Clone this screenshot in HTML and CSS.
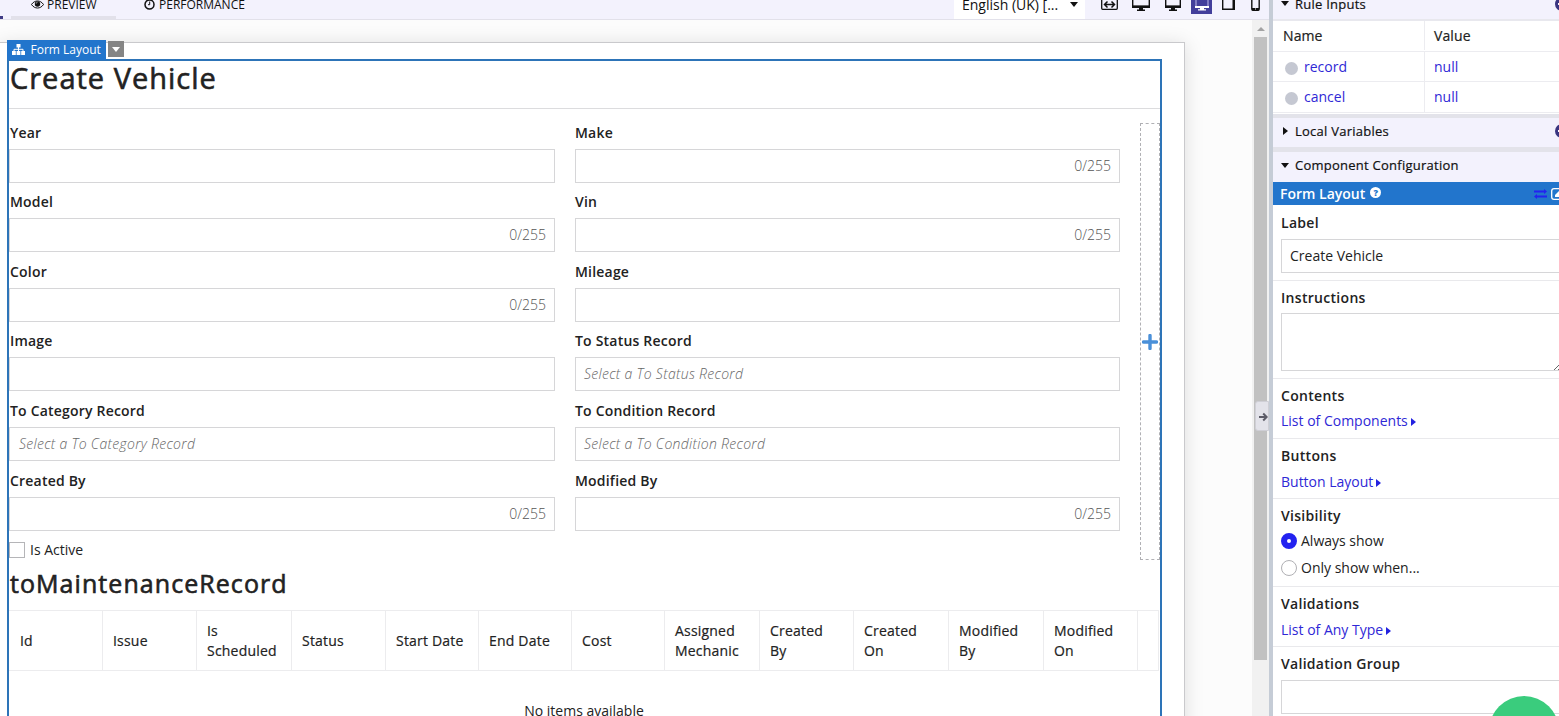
FILE: index.html
```
<!DOCTYPE html>
<html lang="en">
<head>
  <meta charset="UTF-8">
  <title>Create Vehicle - Interface Designer</title>
  <link rel="stylesheet" href="styles.css">
</head>
<body>
  <div class="designer">
    <main class="canvas">
      <header class="toolbar">
        <div class="tab tab-active"></div>
        <div class="tab tab-preview">
          <svg width="13" height="9" viewBox="0 0 13 9"><path d="M.5 4.5C3.5-.2 9.5-.2 12.500 4.500C9.500 9.200 3.500 9.200 .5 4.500Z" fill="none" stroke="#111"/><circle cx="6.500" cy="4" r="2.700" fill="#111"/><path d="M5.200 3.600a1.300 1.300 0 0 1 1.300-1.300" fill="none" stroke="#fff" stroke-width=".6"/></svg>
          <span>PREVIEW</span>
        </div>
        <div class="tab tab-performance">
          <svg width="11" height="11" viewBox="0 0 11 11"><circle cx="5.500" cy="5.500" r="4.500" fill="none" stroke="#111" stroke-width="1.500"/><path d="M5.700 2.500v3.200H4" fill="none" stroke="#111"/></svg>
          <span>PERFORMANCE</span>
        </div>
        <div class="locale"><span>English (UK) [...</span><i class="caret-down"></i></div>
        <div class="devices">
          <svg class="device-fit" width="17" height="11" viewBox="0 0 17 11"><path d="M.7 0v8.300q0 1 1 1h13.600q1 0 1-1V0" fill="none" stroke="#111" stroke-width="1.300"/><path d="M3.500 4.500h10M6.500 1.500l-3 3 3 3M10.500 1.500l3 3-3 3" fill="none" stroke="#111" stroke-width="1.500"/></svg>
          <svg class="device-wide" width="18" height="12" viewBox="0 0 18 12"><path d="M.7 0v6.500h16.600V0" fill="none" stroke="#111" stroke-width="1.400"/><path d="M0 5.500h18v2.500H0zM7 8h4v1.500h2V11H5V9.500h2z" fill="#111"/></svg>
          <svg class="device-desktop" width="16" height="12" viewBox="0 0 16 12"><path d="M.7 0v6.500h14.600V0" fill="none" stroke="#111" stroke-width="1.400"/><path d="M0 5.500h16v2.500H0zM6 8h4v1.500h2V11H4V9.500h2z" fill="#111"/></svg>
          <div class="device-current"><svg width="14" height="12" viewBox="0 0 14 12"><path d="M1 0v6.500h12V0" fill="none" stroke="#a9a6dc" stroke-width="1.200"/><path d="M0 6h14v2H0zM5 8h4v1.200h2v1.300H3V9.200h2z" fill="#fff"/></svg></div>
          <svg class="device-tablet" width="14" height="11" viewBox="0 0 14 11"><path d="M.7 0v9.300H12V0" fill="none" stroke="#111" stroke-width="1.400"/><path d="M10.500 0H13v10h-2.500z" fill="#111"/></svg>
          <svg class="device-phone" width="9" height="12" viewBox="0 0 9 12"><path d="M.8 0v9q0 1.200 1.200 1.200h5Q8.200 10.200 8.200 9V0" fill="none" stroke="#111" stroke-width="1.400"/><path d="M1 8h7v2.500H1z" fill="#111"/><path d="M4 8.500h1v1H4z" fill="#fff"/></svg>
        </div>
      </header>

      <div class="workspace">
        <div class="stage">
          <div class="paper">
            <section class="form-layout">
              <div class="selection-tag">
                <div class="selection-name">
                  <svg width="13" height="11" viewBox="0 0 13 11"><path d="M4.500 0h4v3.500h-4zM0 7h3.800v4H0zM4.600 7h3.800v4H4.600zM9.200 7H13v4H9.200z" fill="#fff"/><path d="M6.500 3v4M2 7.500V5.300h9v2.200" fill="none" stroke="#fff"/></svg>
                  <span>Form Layout</span>
                </div>
                <div class="selection-menu"><i class="caret-down"></i></div>
              </div>

              <h1>Create Vehicle</h1>

              <div class="columns">
                <div class="fields">
                  <div class="field"><label>Year</label><div class="input"></div></div>
                  <div class="field"><label>Make</label><div class="input"><span class="count">0/255</span></div></div>
                  <div class="field"><label>Model</label><div class="input"><span class="count">0/255</span></div></div>
                  <div class="field"><label>Vin</label><div class="input"><span class="count">0/255</span></div></div>
                  <div class="field"><label>Color</label><div class="input"><span class="count">0/255</span></div></div>
                  <div class="field"><label>Mileage</label><div class="input"></div></div>
                  <div class="field"><label>Image</label><div class="input"></div></div>
                  <div class="field"><label>To Status Record</label><div class="input"><span class="placeholder">Select a To Status Record</span></div></div>
                  <div class="field"><label>To Category Record</label><div class="input"><span class="placeholder">Select a To Category Record</span></div></div>
                  <div class="field"><label>To Condition Record</label><div class="input"><span class="placeholder">Select a To Condition Record</span></div></div>
                  <div class="field"><label>Created By</label><div class="input"><span class="count">0/255</span></div></div>
                  <div class="field"><label>Modified By</label><div class="input"><span class="count">0/255</span></div></div>
                  <div class="check"><i class="checkbox"></i><span>Is Active</span></div>
                </div>
                <div class="add-column">
                  <svg width="16" height="16" viewBox="0 0 16 16"><path d="M8 1.500v13M1.500 8h13" fill="none" stroke="#4a90d9" stroke-width="3.400" stroke-linecap="round"/></svg>
                </div>
              </div>

              <h2>toMaintenanceRecord</h2>
              <table class="grid">
                <colgroup>
                  <col class="w94"><col class="w94"><col class="w95"><col class="w94"><col class="w93"><col class="w93"><col class="w93"><col class="w95"><col class="w94"><col class="w95"><col class="w95"><col class="w94"><col class="w21">
                </colgroup>
                <thead>
                  <tr><th>Id</th><th>Issue</th><th>Is Scheduled</th><th>Status</th><th>Start Date</th><th>End Date</th><th>Cost</th><th>Assigned Mechanic</th><th>Created By</th><th>Created On</th><th>Modified By</th><th>Modified On</th><th></th></tr>
                </thead>
                <tbody>
                  <tr><td colspan="13">No items available</td></tr>
                </tbody>
              </table>
            </section>
          </div>
        </div>
        <div class="scrollbar">
          <i class="scroll-up"></i>
          <div class="scroll-thumb"></div>
          <div class="collapse">
            <svg width="9" height="10" viewBox="0 0 9 10"><path d="M0 5h7.500M4.200 1.500L7.700 5 4.200 8.500" fill="none" stroke="#5c5c68" stroke-width="2"/></svg>
          </div>
        </div>
      </div>
    </main>

    <div class="divider"></div>

    <aside class="panel">
      <div class="panel-head head-inputs"><i class="caret-down"></i><span>Rule Inputs</span><i class="add"></i></div>
      <div class="inputs">
        <div class="inputs-row inputs-title"><span>Name</span><span>Value</span></div>
        <div class="inputs-row"><span><i class="dot"></i>record</span><span>null</span></div>
        <div class="inputs-row"><span><i class="dot"></i>cancel</span><span>null</span></div>
      </div>
      <div class="panel-head head-variables"><i class="caret-right"></i><span>Local Variables</span><i class="add"></i></div>
      <div class="panel-head head-config"><i class="caret-down"></i><span>Component Configuration</span></div>
      <div class="component-bar">
        <span>Form Layout</span>
        <i class="help">?</i>
        <svg class="swap" width="13" height="10" viewBox="0 0 13 10"><path d="M0 2.500h11M13 7.500H2" stroke="#2322f0" stroke-width="1.800"/><path d="M10 0l3 2.500L10 5zM3 5L0 7.500 3 10z" fill="#2322f0"/></svg>
        <svg class="edit" width="8" height="12" viewBox="0 0 8 12"><path d="M8 .7H3Q.7.7.7 3v6Q.7 11.300 3 11.300h5" fill="none" stroke="#fff" stroke-width="1.300"/><path d="M4 9V7l4-4v6z" fill="#fff"/></svg>
      </div>

      <div class="prop prop-label"><h3>Label</h3><div class="prop-input">Create Vehicle</div></div>
      <div class="prop prop-instructions">
        <h3>Instructions</h3>
        <div class="prop-area"><svg width="8" height="8" viewBox="0 0 8 8"><path d="M0 8L8 0M4 8l4-4" stroke="#555" stroke-width=".9"/></svg></div>
      </div>
      <div class="prop prop-link prop-contents"><h3>Contents</h3><a>List of Components<i class="caret-right"></i></a></div>
      <div class="prop prop-link"><h3>Buttons</h3><a>Button Layout<i class="caret-right"></i></a></div>
      <div class="prop prop-visibility">
        <h3>Visibility</h3>
        <div class="radio"><i class="radio-on"></i>Always show</div>
        <div class="radio"><i class="radio-off"></i>Only show when...</div>
      </div>
      <div class="prop prop-link"><h3>Validations</h3><a>List of Any Type<i class="caret-right"></i></a></div>
      <div class="prop prop-group"><h3>Validation Group</h3><div class="prop-input"></div></div>
    </aside>
  </div>
  <div class="chat-bubble"></div>
</body>
</html>
```

FILE: styles.css
```
* {
  box-sizing: border-box;
}

body {
  margin: 0;
  height: 716px;
  overflow: hidden;
  position: relative;
  font-family: "Open Sans", sans-serif;
  font-size: 14px;
  color: #222;
  background: #fff;
}

h1, h2, h3 {
  margin: 0;
}

svg, i {
  display: block;
  flex: none;
}

i {
  font-style: normal;
}

.designer {
  display: flex;
  height: 716px;
}

.canvas {
  width: 1269px;
  flex: none;
  display: flex;
  flex-direction: column;
}

.caret-down {
  border: 4px solid transparent;
  border-top: 5px solid #111;
  border-bottom: 0;
}

.caret-right {
  border: 4px solid transparent;
  border-left: 5px solid #111;
  border-right: 0;
}

/* toolbar */
.toolbar {
  height: 20px;
  flex: none;
  display: flex;
  align-items: flex-start;
  overflow: hidden;
  background: #f3f2fd;
  border-bottom: 1px solid #e2e1ea;
  color: #111;
}

.tab {
  height: 19px;
  display: flex;
  line-height: 9px;
  font-size: 12px;
}

.tab-active {
  width: 3px;
  margin-right: 8px;
  border-bottom: 3px solid #3f3a85;
}

.tab-preview {
  width: 105px;
  padding-left: 20px;
  gap: 3px;
  border-bottom: 3px solid #e2e1ea;
}

.tab-performance {
  width: 838px;
  padding-left: 28px;
  gap: 4px;
}

.tab-performance svg {
  margin-top: -1px;
}

.locale {
  width: 131px;
  height: 19px;
  padding-left: 8px;
  display: flex;
  background: #fff;
  line-height: 9px;
}

.locale .caret-down {
  margin: 2px 0 0 12px;
}

.devices {
  display: flex;
  padding-left: 16px;
}

.device-wide {
  margin-left: 14px;
}

.device-desktop {
  margin-left: 15px;
}

.device-current {
  width: 21px;
  height: 14px;
  margin-left: 10px;
  padding-left: 4px;
  background: #423e9b;
}

.device-tablet {
  margin-left: 10px;
}

.device-phone {
  margin-left: 15px;
}

/* canvas */
.workspace {
  flex: 1;
  min-height: 0;
  display: flex;
}

.stage {
  width: 1252px;
  padding-top: 22px;
  overflow: hidden;
  background: #fcfcfc;
}

.paper {
  width: 1185px;
  height: 700px;
  padding: 16px 0 0 7px;
  background: #fff;
  border: 1px solid #c9c9cc;
  border-left: 0;
  box-shadow: 0 2px 18px rgba(0, 0, 0, 0.13);
}

.form-layout {
  position: relative;
  width: 1155px;
  height: 700px;
  border: 2px solid #2d74b8;
}

.selection-tag {
  position: absolute;
  left: -2px;
  top: -21px;
  display: flex;
  gap: 2px;
}

.selection-name {
  width: 99px;
  height: 20px;
  padding: 0 0 1px 5px;
  display: flex;
  align-items: center;
  gap: 5.5px;
  background: #2275cc;
  color: #fff;
  font-size: 12px;
}

.selection-menu {
  width: 16px;
  height: 16px;
  margin-top: 1px;
  padding: 6px 4px;
  background: #858585;
}

.selection-menu .caret-down {
  border-top-color: #fff;
}

h1 {
  height: 48px;
  padding-left: 1px;
  border-bottom: 1px solid #dcdcde;
  font-size: 29px;
  font-weight: 500;
  line-height: 34px;
  letter-spacing: 1px;
  -webkit-text-stroke: 0.6px #222;
}

.columns {
  height: 502px;
  display: flex;
  gap: 20px;
  padding-top: 14px;
}

.fields {
  width: 1111px;
  margin-top: -0.2px;
  display: grid;
  grid-template-columns: 546px 545px;
  grid-auto-rows: 69.55px;
  column-gap: 20px;
}

.field label {
  display: block;
  height: 26px;
  padding-left: 1px;
  line-height: 20.6px;
  font-weight: 600;
  letter-spacing: 0.2px;
}

.field:nth-child(even) label {
  padding-left: 0;
}

.input {
  height: 34px;
  padding: 0 8px;
  border: 1px solid #d6d6d8;
  line-height: 31px;
}

.field:nth-child(odd) .input {
  padding-left: 9px;
}

.count {
  display: block;
  text-align: right;
  font-weight: 300;
  color: #555;
}

.placeholder {
  font-style: italic;
  font-weight: 300;
  color: #666;
  letter-spacing: 0.3px;
}

.check {
  height: 19px;
  display: flex;
  align-items: center;
  gap: 5px;
}

.check span {
  margin-top: -1px;
}

.checkbox {
  width: 16px;
  height: 16px;
  border: 1px solid #b5b5b8;
}

.add-column {
  width: 20px;
  height: 437px;
  display: flex;
  align-items: center;
  justify-content: center;
  border: 1px dashed #b0b0b4;
}

h2 {
  height: 50px;
  margin-top: -51px;
  padding-left: 1px;
  font-size: 25px;
  font-weight: 500;
  line-height: 47px;
  letter-spacing: 1.06px;
  -webkit-text-stroke: 0.6px #222;
}

.grid {
  width: 1150px;
  table-layout: fixed;
  border-collapse: separate;
  border-spacing: 0;
  border-top: 1px solid #ececee;
}

.w21 { width: 21px; }
.w93 { width: 93px; }
.w94 { width: 94px; }
.w95 { width: 95px; }

.grid th {
  height: 60px;
  padding: 0 10px;
  border: solid #ececee;
  border-width: 0 1px 1px 0;
  text-align: left;
  font-weight: 500;
  line-height: 20px;
  letter-spacing: 0.2px;
  -webkit-text-stroke: 0.2px #222;
}

.grid th:first-child {
  padding-left: 11px;
}

.grid th:nth-child(9) {
  padding-right: 20px;
}

.grid td {
  padding: 30px 0;
  text-align: center;
  line-height: 20px;
}

/* scrollbar */
.scrollbar {
  position: relative;
  width: 17px;
  padding: 7px 2px 0;
  background: #f1f1f1;
}

.scroll-up {
  width: 8px;
  height: 4px;
  margin: 0 0 6px 3px;
  border: 4px solid transparent;
  border-bottom-color: #a3a3a3;
  border-top: 0;
}

.scroll-thumb {
  height: 623px;
  background: #c1c1c1;
}

.collapse {
  position: absolute;
  left: 3px;
  top: 381px;
  width: 14px;
  height: 30px;
  display: flex;
  align-items: center;
  padding: 1px 0 0 3px;
  background: #e3e3ea;
  border: 1px solid #cfcfd6;
  border-radius: 3px 0 0 3px;
}

.divider {
  width: 4px;
  flex: none;
  background: #c5ccd6;
}

/* right panel */
.panel {
  width: 286px;
  flex: none;
  overflow: hidden;
}

.panel-head {
  display: flex;
  align-items: center;
  padding-left: 8px;
  background: #f3f2fd;
  color: #111;
  font-size: 13px;
  font-weight: 500;
  letter-spacing: 0.25px;
  -webkit-text-stroke: 0.2px #111;
}

.panel-head span {
  margin-left: 6px;
}

.panel-head .caret-right {
  margin: 0 1px 0 2px;
}

.add {
  width: 14px;
  height: 14px;
  margin: 0 -10px 0 auto;
  border-radius: 50%;
  background: linear-gradient(#fff, #fff) 3px 6px / 8px 2px no-repeat #3a3580;
}

.head-inputs {
  height: 21px;
  padding-bottom: 12px;
  border-bottom: 2px solid #e8e8ee;
}

.head-variables {
  height: 33px;
  padding-bottom: 3px;
  border-top: 4px solid #e3e3ea;
}

.head-config {
  height: 35px;
  padding-bottom: 5px;
  border-top: 5px solid #e3e3ea;
}

.head-config .caret-down {
  margin-top: 2px;
}

.inputs {
  height: 93px;
}

.inputs-row {
  height: 30px;
  display: flex;
  border-bottom: 1px solid #ececf0;
  color: #2f28d6;
  line-height: 29px;
}

.inputs-row:last-child {
  height: 31px;
}

.inputs-row span {
  display: flex;
  align-items: center;
  gap: 6px;
}

.inputs-row span:first-child {
  width: 152px;
  padding-left: 12px;
  border-right: 1px solid #ececf0;
}

.inputs-row span:last-child {
  padding-left: 9px;
}

.inputs-row:last-child span {
  padding-bottom: 1px;
}

.inputs-title {
  height: 31px;
  padding-bottom: 1px;
  color: #222;
  font-weight: 500;
  letter-spacing: 0.1px;
  -webkit-text-stroke: 0.2px #222;
}

.inputs-title span:first-child {
  padding-left: 10px;
}

.dot {
  width: 13px;
  height: 13px;
  margin-top: 3px;
  border-radius: 50%;
  background: #c5c8d2;
}

.component-bar {
  height: 23px;
  display: flex;
  align-items: center;
  padding-left: 7px;
  overflow: hidden;
  background: #2275cc;
  color: #fff;
  font-weight: 600;
}

.help {
  width: 11px;
  height: 11px;
  margin: -2px 0 0 5px;
  border-radius: 50%;
  background: #fff;
  color: #2275cc;
  font-size: 9px;
  font-weight: 800;
  line-height: 11px;
  text-align: center;
}

.swap {
  margin-left: auto;
}

.edit {
  margin-left: 4px;
}

.prop {
  padding: 8px 0 0 8px;
  border-bottom: 1px solid #e9e9ec;
}

.prop h3 {
  height: 20px;
  font-size: 14px;
  font-weight: 600;
  line-height: 20px;
  letter-spacing: 0.3px;
}

.prop-input {
  height: 34px;
  margin-top: 6px;
  padding-left: 8px;
  border: 1px solid #d6d6d8;
  border-right: 0;
  line-height: 32px;
}

.prop-label {
  height: 76px;
}

.prop-instructions {
  height: 98px;
  padding-top: 7px;
}

.prop-area {
  height: 58px;
  margin-top: 5px;
  display: flex;
  align-items: flex-end;
  justify-content: flex-end;
  border: 1px solid #d6d6d8;
  border-right: 0;
}

.prop-area svg {
  margin-right: -3px;
}

.prop-link {
  height: 60px;
  padding-top: 7px;
}

.prop-link a {
  display: flex;
  align-items: center;
  margin-top: 6px;
  line-height: 20px;
  color: #2f28d6;
}

.prop-contents a {
  margin-top: 5px;
}

.prop-link .caret-right {
  margin: 2px 0 0 3px;
  border-left-color: #2322e0;
}

.prop-visibility {
  height: 88px;
  padding-top: 7px;
}

.prop-visibility h3 {
  height: 21px;
}

.radio {
  height: 27px;
  display: flex;
  align-items: center;
  gap: 4px;
}

.radio-on {
  width: 16px;
  height: 16px;
  border: 6px solid #2322f0;
  border-radius: 50%;
}

.radio-off {
  width: 16px;
  height: 16px;
  border: 1px solid #b0b0b4;
  border-radius: 50%;
}

.prop-group {
  padding-top: 7px;
  border-bottom: 0;
}

/* floating chat button */
.chat-bubble {
  position: absolute;
  left: 1489px;
  top: 696px;
  width: 70px;
  height: 70px;
  border-radius: 50%;
  background: #3acc7d;
}
```
